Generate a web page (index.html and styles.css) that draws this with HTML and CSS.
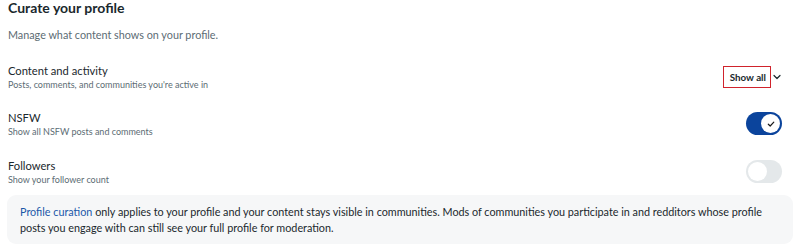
FILE: index.html
```html
<!DOCTYPE html>
<html>
<head>
<meta charset="utf-8">
<link rel="stylesheet" href="styles.css">
</head>
<body>
<div class="page">
  <h2 class="title">Curate your profile</h2>
  <p class="lead">Manage what content shows on your profile.</p>

  <div class="row row-first">
    <div class="label">
      <div class="name">Content and activity</div>
      <div class="desc">Posts, comments, and communities you're active in</div>
    </div>
    <div class="control control-select">
      <span class="showall">Show all</span>
      <svg class="chev" width="8" height="8" viewBox="0 0 8 8"><path d="M1 2.5 L4 5.5 L7 2.5" fill="none" stroke="#1a282d" stroke-width="1.2" stroke-linecap="round" stroke-linejoin="round"/></svg>
    </div>
  </div>

  <div class="row">
    <div class="label">
      <div class="name">NSFW</div>
      <div class="desc">Show all NSFW posts and comments</div>
    </div>
    <div class="control">
      <div class="toggle on"><div class="knob"><svg width="10" height="10" viewBox="0 0 10 10"><path d="M2.3 5.2 L4.2 7 L7.8 3.2" fill="none" stroke="#1a1a1b" stroke-width="1.2" stroke-linecap="round" stroke-linejoin="round"/></svg></div></div>
    </div>
  </div>

  <div class="row row-last">
    <div class="label">
      <div class="name">Followers</div>
      <div class="desc">Show your follower count</div>
    </div>
    <div class="control">
      <div class="toggle off"><div class="knob"></div></div>
    </div>
  </div>

  <div class="info">
    <a class="link">Profile curation</a> only applies to your profile and your content stays visible in communities. Mods of communities you participate in and redditors whose profile posts you engage with can still see your full profile for moderation.
  </div>
</div>
</body>
</html>
```

FILE: styles.css
```css
html, body {
  margin: 0;
  padding: 0;
  background: #ffffff;
}
body {
  font-family: Lato, "Noto Sans", sans-serif;
  color: #1a282d;
}
.page {
  padding: 0 8px;
}
.title {
  margin: 0;
  font-size: 14px;
  font-weight: 700;
  line-height: 15px;
  color: #1a282d;
}
.lead {
  margin: 12px 0 0 0;
  font-size: 10.8px;
  line-height: 16px;
  color: #5c6c74;
}
.row {
  display: flex;
  align-items: center;
  justify-content: space-between;
  margin-top: 19px;
  height: 28px;
}
.row-first {
  margin-top: 19.5px;
}
.row-last {
  margin-top: 20px;
}
.name {
  font-size: 11.2px;
  line-height: 15px;
  color: #1a282d;
}
.desc {
  font-size: 9px;
  line-height: 13px;
  color: #5c6c74;
}
.control {
  display: flex;
  align-items: center;
  padding-right: 10px;
}
.control-select {
  padding-right: 11px;
}
.showall {
  font-size: 9.8px;
  font-weight: 700;
  color: #1a282d;
  border: 1px solid #d0232c;
  padding: 3px 4px 3px 6px;
  line-height: 14px;
}
.chev {
  margin-left: 2px;
}
.toggle {
  width: 36px;
  height: 23px;
  border-radius: 12px;
  box-sizing: border-box;
  display: flex;
  align-items: center;
  padding: 2px;
}
.toggle.on {
  background: #0b449c;
  justify-content: flex-end;
}
.toggle.off {
  background: #e4e8ea;
  justify-content: flex-start;
}
.knob {
  width: 19px;
  height: 19px;
  border-radius: 50%;
  background: #ffffff;
  display: flex;
  align-items: center;
  justify-content: center;
}
.info {
  margin: 9.5px -1px 0 -1px;
  background: #f6f7f8;
  border-radius: 9px;
  padding: 9px 13px 7.5px 13px;
  font-size: 10.8px;
  line-height: 16px;
  color: #1a282d;
}
.link {
  color: #1a57a8;
}
```
